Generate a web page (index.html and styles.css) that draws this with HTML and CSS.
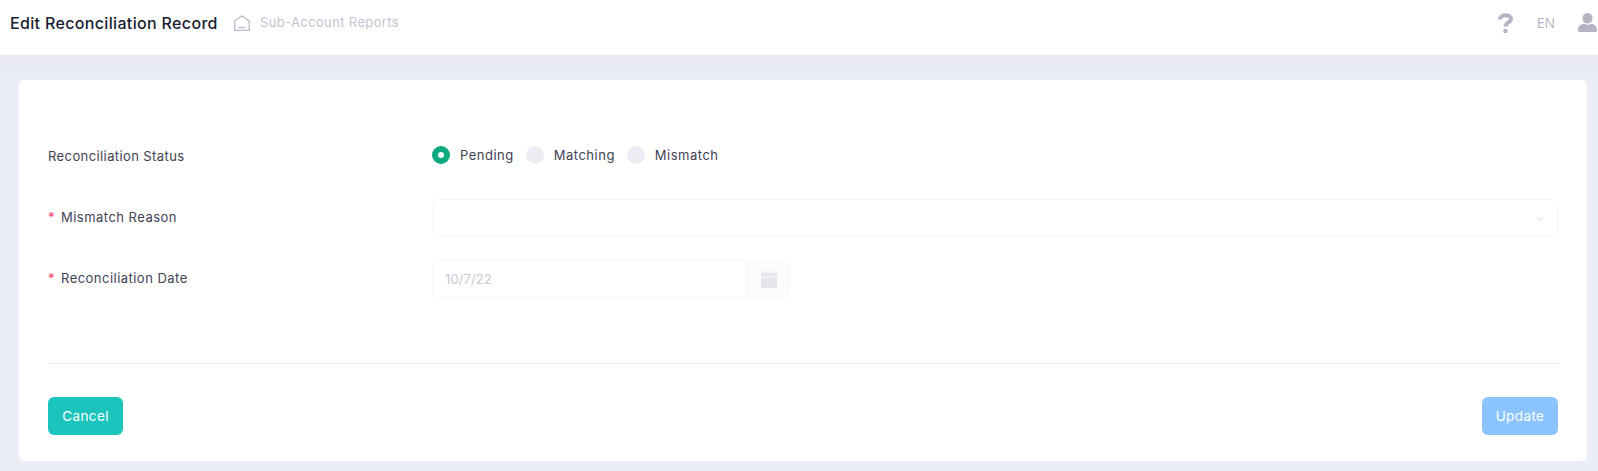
FILE: index.html
```html
<!DOCTYPE html>
<html lang="en">
<head>
<meta charset="utf-8">
<title>Edit Reconciliation Record</title>
<link rel="stylesheet" href="styles.css">
</head>
<body>
<header class="topbar">
  <div class="topbar-left">
    <h1 class="page-title">Edit Reconciliation Record</h1>
    <svg class="home-icon" viewBox="0 0 16 16" width="16" height="16" fill="none" stroke="#bdbbcb" stroke-width="1.300"><path d="M.7 15.300V6L8 .8 15.300 6v9.300z"/><path d="M4.500 12.500h7"/></svg>
    <span class="crumb">Sub-Account Reports</span>
  </div>
  <div class="topbar-right">
    <svg class="help-icon" viewBox="0 0 15 20" width="15" height="20" fill="none" stroke="#b5b3c4" stroke-width="4"><path d="M2 6.500C2 .8 13 .8 13 6.300 13 9.500 7.500 9.300 7.500 13.500"/><circle cx="7.500" cy="18" r="2.200" fill="#b5b3c4" stroke="none"/></svg>
    <span class="lang">EN</span>
    <svg class="user-icon" viewBox="0 0 18 18" width="19" height="19" fill="#b5b3c4"><ellipse cx="9" cy="5" rx="4.800" ry="5"/><path d="M0 15.500C0 12.500 3 10.500 5.500 10.200 7.500 11.300 10.500 11.300 12.500 10.200 15 10.500 18 12.500 18 15.500V16.500Q18 18 16 18H2Q0 18 0 16.500z"/></svg>
  </div>
</header>
<main class="content">
  <section class="card">
    <form class="form">
      <div class="row row-status">
        <label class="label label-status">Reconciliation Status</label>
        <div class="radios">
          <span class="radio radio-on"></span><span class="radio-text">Pending</span>
          <span class="radio"></span><span class="radio-text">Matching</span>
          <span class="radio"></span><span class="radio-text">Mismatch</span>
        </div>
      </div>
      <div class="row row-reason">
        <label class="label label-req"><span class="req">*</span>Mismatch Reason</label>
        <div class="select"><span class="caret"></span></div>
      </div>
      <div class="row row-date">
        <label class="label label-req"><span class="req">*</span>Reconciliation Date</label>
        <div class="date">
          <span class="date-value">10/7/22</span>
          <span class="date-btn">
            <svg viewBox="0 0 16 17" width="16" height="17" fill="#e4e4ea"><path d="M3 0h2.500v2h5V0H13v2h3v3.500H0V2h3zM0 6.500h16V17H0z"/></svg>
          </span>
        </div>
      </div>
    </form>
    <div class="actions">
      <button class="btn btn-cancel" type="button">Cancel</button>
      <button class="btn btn-update" type="button">Update</button>
    </div>
  </section>
</main>
</body>
</html>
```
FILE: styles.css
```css
* { box-sizing: border-box; }
html, body { margin: 0; height: 100%; }
body {
  width: 1598px;
  height: 471px;
  overflow: hidden;
  background: #ebeef6;
  font-family: "Inter", "Noto Sans", "Liberation Sans", sans-serif;
  display: flex;
  flex-direction: column;
}
.topbar {
  height: 55px;
  flex: none;
  background: #fff;
  display: flex;
  justify-content: space-between;
  padding: 0 0 10px 10px;
  align-items: center;
}
.topbar-left, .topbar-right { display: flex; align-items: center; }
.page-title {
  margin: 0;
  font-size: 16px;
  font-weight: 500;
  letter-spacing: .34px;
  color: #181c32;
  width: 224px;
  white-space: nowrap;
}
.home-icon { margin-right: 10px; }
.crumb { font-size: 13px; letter-spacing: .37px; color: #c4c2d1; margin-bottom: 1px; }
.help-icon { margin-right: 24px; }
.lang { font-size: 14px; color: #b5b3c4; margin-right: 23px; font-family: "Open Sans", sans-serif; }
.user-icon { margin-right: 1px; }
.content {
  flex: 1;
  padding: 25px 11px 10px 19px;
  background: linear-gradient(#e7e8f2, #ebeef6 32px);
}
.card {
  height: 381px;
  background: #fff;
  border-radius: 5px;
  padding: 0 29px;
  display: flex;
  flex-direction: column;
}
.form { height: 284px; border-bottom: 1px solid #ebedf3; padding-top: 57px; }
.row { display: flex; align-items: center; }
.row-status { height: 36px; }
.row-reason { height: 40px; margin-top: 25px; }
.row-date { height: 38px; margin-top: 22px; }
.label { width: 384px; flex: none; font-size: 13px; letter-spacing: .4px; color: #3f4254; }
.label-status { margin-top: 2px; }
.label-req { margin-bottom: 2px; letter-spacing: .47px; }
.req { color: #f1416c; display: inline-block; width: 13px; }
.radios { display: flex; align-items: center; font-size: 13px; letter-spacing: .5px; color: #3f4254; }
.radio { width: 18px; height: 18px; border-radius: 50%; background: #ebedf3; flex: none; }
.radio-on { background: #0ca97f; position: relative; }
.radio-on::after { content: ""; position: absolute; left: 6px; top: 6px; width: 6px; height: 6px; border-radius: 50%; background: #fff; }
.radio-text { margin: 0 12px 0 10px; }
.select {
  flex: 1;
  height: 38px;
  border: 1px solid #f5f6fa;
  border-radius: 7px;
  display: flex;
  align-items: center;
  justify-content: flex-end;
  padding-right: 12px;
}
.caret { border: 5px solid transparent; border-top: 6px solid #f3f3f9; border-bottom: 0; margin-top: 3px; }
.date {
  width: 357px;
  height: 38px;
  border: 1px solid #f5f6fa;
  border-radius: 7px;
  display: flex;
  align-items: center;
}
.date-value { flex: 1; padding-left: 12px; font-size: 13px; letter-spacing: .1px; color: #c9c9d4; }
.date-btn {
  width: 41px;
  height: 100%;
  background: #fcfcfe;
  border-left: 1px solid #f5f6fa;
  border-radius: 0 7px 7px 0;
  padding-left: 2px;
  display: flex;
  align-items: center;
  justify-content: center;
}
.actions { display: flex; justify-content: space-between; padding-top: 33px; }
.btn {
  height: 38px;
  border: 0;
  border-radius: 6px;
  color: #fff;
  font: inherit;
  font-size: 13.500px;
  letter-spacing: .4px;
}
.btn-cancel { width: 75px; background: #1bc5bd; }
.btn-update { width: 76px; background: #8bc3ff; }
```
